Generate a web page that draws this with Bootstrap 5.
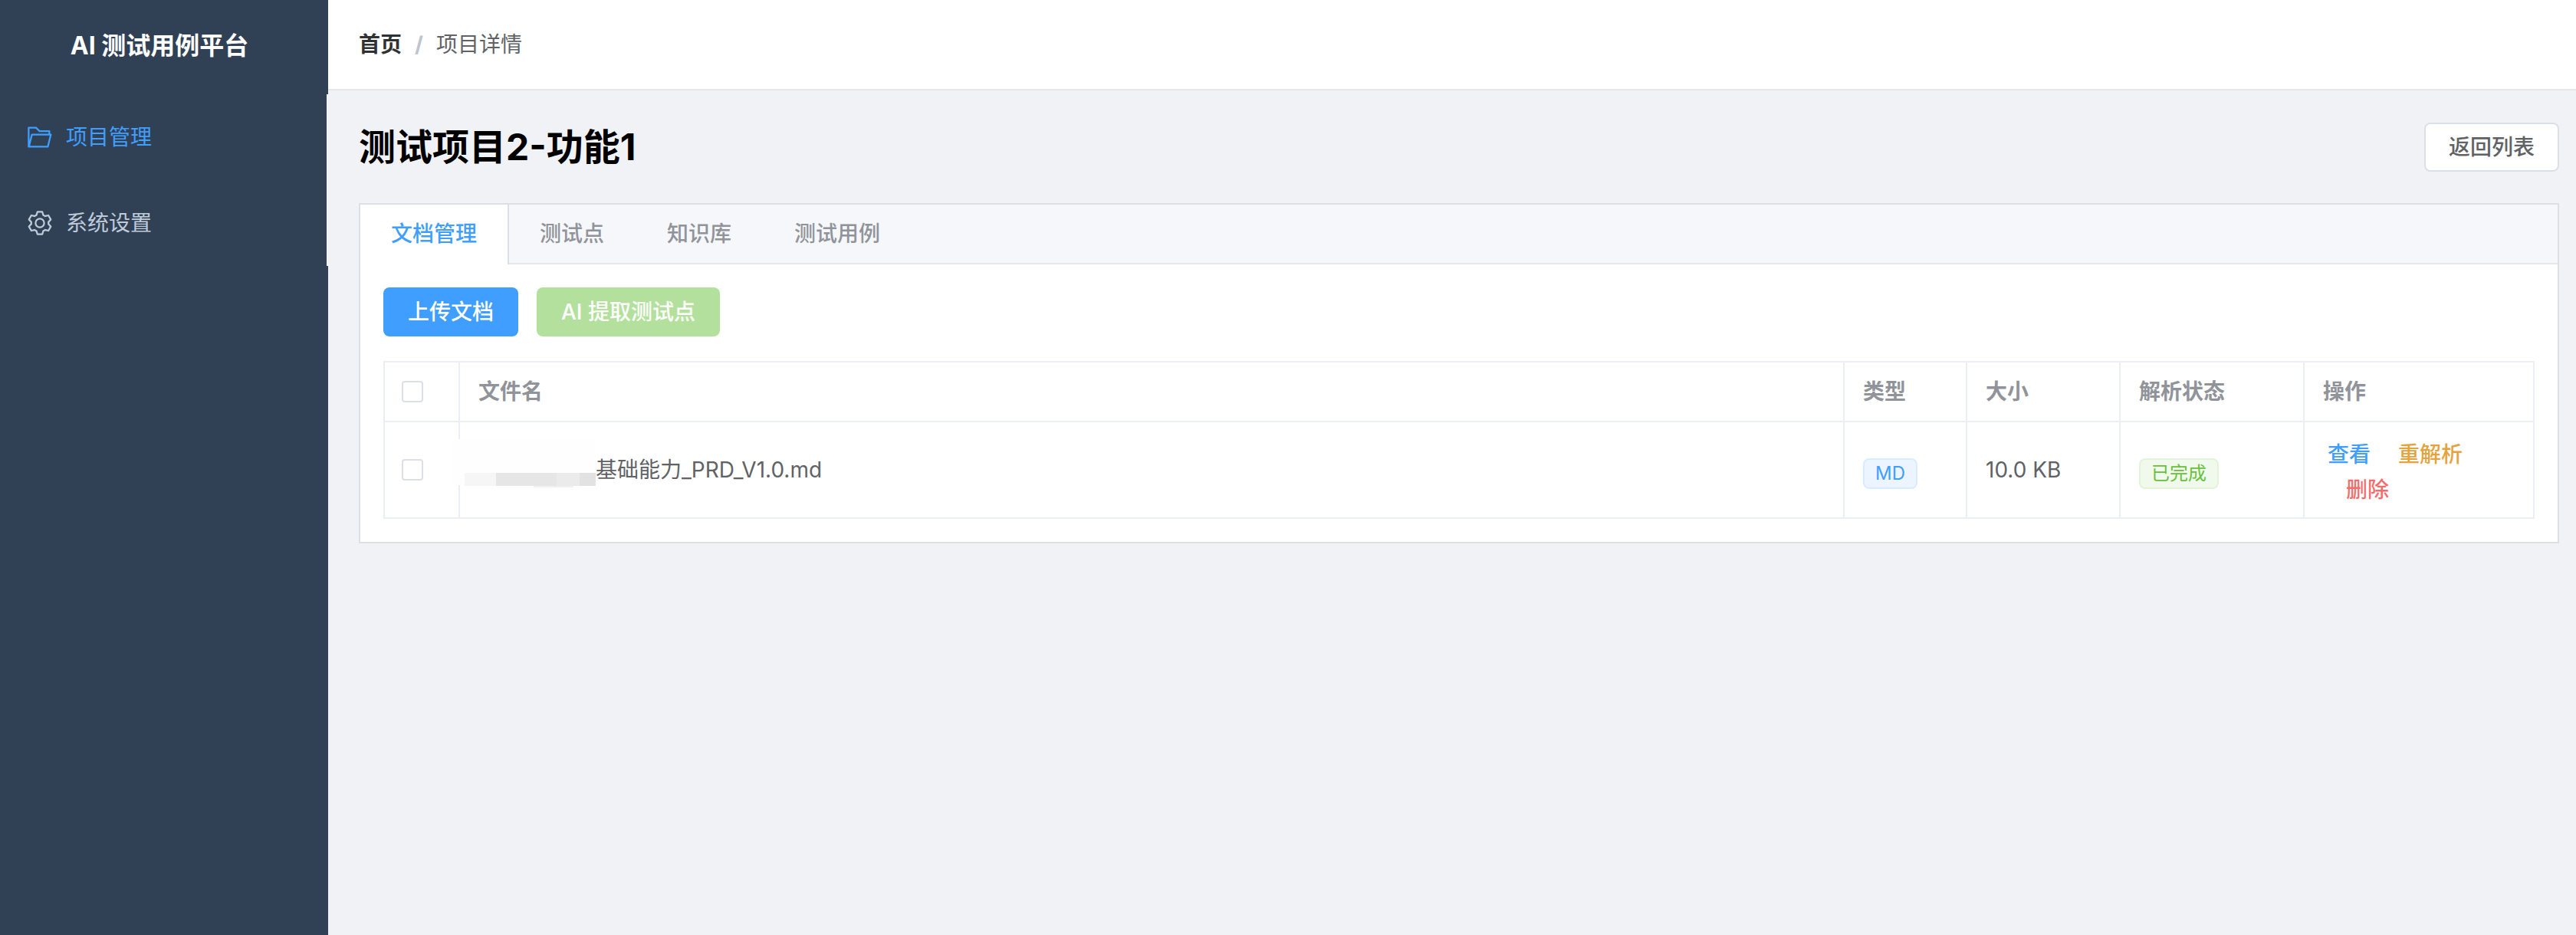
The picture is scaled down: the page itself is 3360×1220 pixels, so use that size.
<!DOCTYPE html>
<html lang="zh-CN">
<head>
    <meta charset="UTF-8">
    <meta name="viewport" content="width=device-width, initial-scale=1">
    <title>AI 测试用例平台</title>
    <link href="https://cdn.jsdelivr.net/npm/bootstrap@5.3.0/dist/css/bootstrap.min.css" rel="stylesheet">
    <style>
        body { font-family: Inter, "Noto Sans CJK SC", sans-serif; font-size: 28px; color: #606266; background: #f0f2f5; }

        /* sidebar */
        .side-bar { width: 428px; background: #304156; }
        .side-logo { height: 123px; padding: 0 12px 3px 0; font-size: 32px; font-weight: 700; color: #fff; }
        .side-menu { border-right: 2px solid #f0f2f5; }
        .side-item { height: 112px; padding-left: 34px; gap: 16px; color: #bfcbd9; }
        .side-item.is-active { color: #409eff; }
        .side-item svg { width: 36px; height: 36px; }

        /* top bar */
        .top-bar { height: 118px; background: #fff; border-bottom: 2px solid #e6e6e6; padding: 0 40px; }
        .top-bar .breadcrumb { --bs-breadcrumb-margin-bottom: 0; --bs-breadcrumb-divider-color: #c0c4cc; --bs-breadcrumb-item-padding-x: 17px; --bs-breadcrumb-item-active-color: #606266; }
        .top-bar .breadcrumb-item:first-child { font-weight: 700; color: #303133; }
        .top-bar .breadcrumb-item + .breadcrumb-item::before { font-weight: 700; }

        /* content */
        .page-body { padding: 40px; }
        .page-head { height: 67px; margin-bottom: 40px; }
        .page-title { font-size: 48px; font-weight: 700; color: #000; margin: 0; }
        .btn-back { --bs-btn-font-size: 28px; --bs-btn-font-weight: 500; --bs-btn-color: #606266; --bs-btn-bg: #fff; --bs-btn-border-color: #dcdfe6; --bs-btn-border-width: 2px; --bs-btn-border-radius: 8px; --bs-btn-padding-x: 30px; --bs-btn-padding-y: 0; height: 64px; line-height: 60px; }

        .tab-card { --bs-card-border-width: 2px; --bs-card-border-color: #dcdfe6; --bs-card-border-radius: 0; --bs-card-inner-border-radius: 0; --bs-card-bg: #fff; }
        .tab-strip { --bs-nav-tabs-border-width: 0; --bs-nav-tabs-border-radius: 0; background: #f5f7fa; border-bottom: 2px solid #e4e7ed; height: 78px; }
        .tab-strip .nav-link { height: 78px; padding: 0 40px; line-height: 76px; font-size: 28px; font-weight: 500; color: #909399; border: 2px solid transparent; border-width: 0 2px; margin: 0 -2px 0 0; }
        .tab-strip .nav-link.active { background: #fff; color: #409eff; border-left-width: 0; border-right-color: #dcdfe6; margin-left: 0; }
        .tab-pane-body { padding: 30px; }

        .btn-main { --bs-btn-font-size: 28px; --bs-btn-font-weight: 500; --bs-btn-color: #fff; --bs-btn-border-width: 0; --bs-btn-border-radius: 8px; --bs-btn-padding-y: 0; --bs-btn-disabled-color: #fff; --bs-btn-disabled-opacity: 1; height: 64px; line-height: 64px; }
        .btn-upload { --bs-btn-bg: #409eff; --bs-btn-padding-x: 32px; }
        .btn-extract { --bs-btn-disabled-bg: #b3e19d; --bs-btn-padding-x: 32px; }

        .doc-table { table-layout: fixed; width: 2806px; margin: 32px 0 0; --bs-border-color: #ebeef5; --bs-border-width: 2px; --bs-table-color: #606266; }
        .doc-table th { height: 78px; padding: 0 24px; font-weight: 600; color: #909399; vertical-align: middle; }
        .doc-table td { height: 126px; padding: 0 24px; vertical-align: middle; }
        .doc-table th:first-child, .doc-table td:first-child { padding-left: 22px; }
        .doc-table td.cell-low { padding-top: 6px; }
        .doc-table .form-check-input { width: 28px; height: 28px; margin: 0; border: 2px solid #dcdfe6; border-radius: 4px; float: none; display: block; }
        .doc-table .col-check { width: 98px; }

        .file-mask { display: inline-block; width: 153px; height: 1px; position: relative; }
        .mask-white { position: absolute; left: -34px; top: -49px; width: 187px; height: 60px; background: #fefefe; }
        .mask-grey { position: absolute; left: -18px; bottom: -11px; width: 171px; height: 17px; background: linear-gradient(90deg, #f6f6f6 0 41px, #e6e6e6 41px 120px, #ebebeb 120px 150px, #e2e2e2 150px); }
        .mask-grey::after { content: ""; position: absolute; left: 90px; bottom: -2px; width: 52px; height: 2px; background: #f0f0f0; }

        .tag-soft { display: inline-block; height: 40px; line-height: 36px; padding: 0 14px; font-size: 24px; border-radius: 8px; border: 2px solid; font-weight: 400; }
        .tag-md { background: #ecf5ff; border-color: #d9ecff; color: #409eff; }
        .tag-done { background: #f0f9eb; border-color: #e1f3d8; color: #67c23a; }

        .op-cell { line-height: 46px; }
        .op-link { display: inline-block; padding: 0 6px; font-weight: 500; text-decoration: none; }
        .op-link + .op-link { margin-left: 24px; }
        .op-view { color: #409eff; }
        .op-reparse { color: #e6a23c; }
        .op-delete { color: #f56c6c; }
    </style>
</head>
<body class="d-flex vh-100 overflow-hidden">

    <aside class="side-bar flex-shrink-0">
        <div class="side-logo d-flex align-items-center justify-content-center">AI 测试用例平台</div>
        <div class="side-menu">
            <div class="side-item is-active d-flex align-items-center">
                <svg viewBox="0 0 1024 1024" fill="currentColor"><path d="M878.08 448H241.92l-96 384h636.16l96-384zM832 384v-64H485.76L357.504 192H128v448l57.92-231.744A32 32 0 0 1 216.96 384H832zm-24.96 512H96a32 32 0 0 1-32-32V160a32 32 0 0 1 32-32h287.872l128.384 128H864a32 32 0 0 1 32 32v96h23.04a32 32 0 0 1 31.04 39.744l-112 448A32 32 0 0 1 807.04 896z"/></svg>
                <span>项目管理</span>
            </div>
            <div class="side-item d-flex align-items-center">
                <svg viewBox="0 0 1024 1024" fill="currentColor"><path d="M600.704 64a32 32 0 0 1 30.464 22.208l35.2 109.376c14.784 7.232 28.928 15.36 42.432 24.512l112.384-24.192a32 32 0 0 1 34.432 15.36L944.32 364.8a32 32 0 0 1-4.032 37.504l-77.12 85.12a357.12 357.12 0 0 1 0 49.024l77.12 85.248a32 32 0 0 1 4.032 37.504l-88.704 153.6a32 32 0 0 1-34.432 15.296L708.8 803.904c-13.44 9.088-27.648 17.28-42.368 24.512l-35.264 109.376A32 32 0 0 1 600.704 960H423.296a32 32 0 0 1-30.464-22.208L357.696 828.48a351.616 351.616 0 0 1-42.56-24.64l-112.32 24.256a32 32 0 0 1-34.432-15.36L79.68 659.2a32 32 0 0 1 4.032-37.504l77.12-85.248a357.12 357.12 0 0 1 0-48.896l-77.12-85.248A32 32 0 0 1 79.68 364.8l88.704-153.6a32 32 0 0 1 34.432-15.296l112.32 24.256c13.568-9.152 27.776-17.408 42.56-24.64l35.2-109.312A32 32 0 0 1 423.232 64H600.64zm-23.424 64H446.72l-36.352 113.088-24.512 11.968a294.113 294.113 0 0 0-34.816 20.096l-22.656 15.36-116.224-25.088-65.28 113.152 79.68 88.192-1.92 27.136a293.12 293.12 0 0 0 0 40.192l1.92 27.136-79.808 88.192 65.344 113.152 116.224-25.024 22.656 15.296a294.113 294.113 0 0 0 34.816 20.096l24.512 11.968L446.72 896h130.688l36.48-113.152 24.448-11.904a288.282 288.282 0 0 0 34.752-20.096l22.592-15.296 116.288 25.024 65.28-113.152-79.744-88.192 1.92-27.136a293.12 293.12 0 0 0 0-40.256l-1.92-27.136 79.808-88.128-65.344-113.152-116.288 24.96-22.592-15.232a287.616 287.616 0 0 0-34.752-20.096l-24.448-11.904L577.344 128zM512 320a192 192 0 1 1 0 384 192 192 0 0 1 0-384zm0 64a128 128 0 1 0 0 256 128 128 0 0 0 0-256z"/></svg>
                <span>系统设置</span>
            </div>
        </div>
    </aside>

    <div class="flex-grow-1 d-flex flex-column">
        <header class="top-bar d-flex align-items-center flex-shrink-0">
            <ol class="breadcrumb">
                <li class="breadcrumb-item">首页</li>
                <li class="breadcrumb-item active">项目详情</li>
            </ol>
        </header>

        <main class="page-body">
            <div class="page-head d-flex justify-content-between align-items-center">
                <h2 class="page-title">测试项目2-功能1</h2>
                <button type="button" class="btn btn-back">返回列表</button>
            </div>

            <div class="card tab-card">
                <ul class="nav nav-tabs tab-strip">
                    <li class="nav-item"><a class="nav-link active" href="#">文档管理</a></li>
                    <li class="nav-item"><a class="nav-link" href="#">测试点</a></li>
                    <li class="nav-item"><a class="nav-link" href="#">知识库</a></li>
                    <li class="nav-item"><a class="nav-link" href="#">测试用例</a></li>
                </ul>
                <div class="tab-pane-body">
                    <div class="d-flex gap-4">
                        <button type="button" class="btn btn-main btn-upload">上传文档</button>
                        <button type="button" class="btn btn-main btn-extract" disabled>AI 提取测试点</button>
                    </div>

                    <table class="table table-bordered doc-table">
                        <colgroup>
                            <col class="col-check">
                            <col>
                            <col style="width: 160px">
                            <col style="width: 200px">
                            <col style="width: 240px">
                            <col style="width: 300px">
                        </colgroup>
                        <thead>
                            <tr>
                                <th><input class="form-check-input" type="checkbox"></th>
                                <th>文件名</th>
                                <th>类型</th>
                                <th>大小</th>
                                <th>解析状态</th>
                                <th>操作</th>
                            </tr>
                        </thead>
                        <tbody>
                            <tr>
                                <td><input class="form-check-input" type="checkbox"></td>
                                <td><span class="file-mask"><span class="mask-white"></span><span class="mask-grey"></span></span>基础能力_PRD_V1.0.md</td>
                                <td class="cell-low"><span class="tag-soft tag-md">MD</span></td>
                                <td>10.0 KB</td>
                                <td class="cell-low"><span class="tag-soft tag-done">已完成</span></td>
                                <td class="op-cell cell-low">
                                    <a class="op-link op-view" href="#">查看</a><a class="op-link op-reparse" href="#">重解析</a><a class="op-link op-delete" href="#">删除</a>
                                </td>
                            </tr>
                        </tbody>
                    </table>
                </div>
            </div>
        </main>
    </div>

    <script src="https://cdn.jsdelivr.net/npm/bootstrap@5.3.0/dist/js/bootstrap.bundle.min.js"></script>
</body>
</html>
